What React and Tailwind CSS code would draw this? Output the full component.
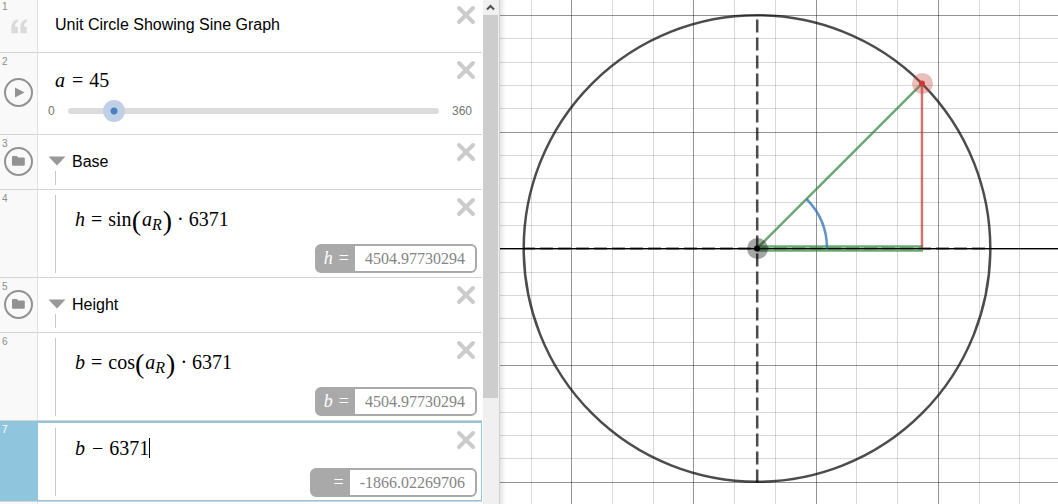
import React, { useState } from "react";

const CENTER = { x: 257, y: 248.5 };
const RADIUS = 233.3;

const MAJOR_X = [71, 193, 316, 438];
const MINOR_X = [31, 112, 153, 234, 275, 356, 397, 479, 519];
const MAJOR_Y = [15, 132, 365, 482];
const MINOR_Y = [38, 62, 85, 108, 155, 178, 202, 225, 272, 295, 318, 342, 388, 412, 435, 458];

function CloseButton() {
  return (
    <button type="button" aria-label="Delete" className="absolute right-1.5 top-[7px] cursor-pointer">
      <svg width="20" height="20" viewBox="0 0 20 20" className="block" stroke="#cccccc" strokeWidth="4" strokeLinecap="round">
        <path d="M3 3 L17 17 M17 3 L3 17" />
      </svg>
    </button>
  );
}

function PlayIcon() {
  return (
    <svg width="11" height="11" viewBox="0 0 11 11" className="ml-0.5" fill="#929292">
      <path d="M1 0.5 L10.5 5.5 L1 10.5 Z" />
    </svg>
  );
}

function FolderIcon() {
  return (
    <svg width="13" height="12" viewBox="0 0 13 12" fill="#929292">
      <path d="M0 2 Q0 1 1 1 H4.6 Q5.3 1 5.6 1.8 L5.9 2.4 H11.8 Q12.8 2.4 12.8 3.4 V9.8 Q12.8 10.8 11.8 10.8 H1 Q0 10.8 0 9.8 Z" />
    </svg>
  );
}

function QuoteIcon() {
  return (
    <svg width="17" height="15" viewBox="0 0 17 15" className="mt-1 ml-0.5" fill="#dadada">
      <path d="M6.6 0.3 C2.6 1 0.4 4.2 0.4 9 V14.3 H6.8 V7.8 H3.9 C4 5.2 4.9 3.6 6.9 2.8 Z" />
      <path d="M15.6 0.3 C11.6 1 9.4 4.2 9.4 9 V14.3 H15.8 V7.8 H12.9 C13 5.2 13.9 3.6 15.9 2.8 Z" />
    </svg>
  );
}

function RoundButton({ label, children }) {
  return (
    <button
      type="button"
      aria-label={label}
      className="w-[29px] h-[29px] shrink-0 rounded-full border-2 border-[#929292] flex items-center justify-center cursor-pointer"
    >
      {children}
    </button>
  );
}

function Row({ number, icon, selected, children }) {
  return (
    <li className={selected ? "flex bg-[#8fc6dd]" : "flex border-b border-[#d4d4d4]"}>
      <div
        className={
          selected
            ? "relative w-[38px] shrink-0 text-white"
            : "relative w-[38px] shrink-0 pb-0.5 border-r border-[#e2e2e2] bg-[#f9f9f9] text-[#8c8c8c] flex items-center justify-center"
        }
      >
        <span className="absolute left-0.5 top-1 text-[10px] leading-[10px]">{number}</span>
        {icon}
      </div>
      <div
        className={
          selected
            ? "relative flex-1 min-w-0 bg-white border-t-2 border-b border-[#8fc6dd] shadow-[inset_-1px_0_0_#8fc6dd]"
            : "relative flex-1 min-w-0 bg-white"
        }
      >
        {children}
        <CloseButton />
      </div>
    </li>
  );
}

function Folder({ name }) {
  return (
    <div className="relative h-[54px] flex items-center">
      <button type="button" aria-label={`Collapse ${name}`} className="ml-2.5 mb-0.5 cursor-pointer">
        <svg width="18" height="10" viewBox="0 0 18 10" fill="#999999">
          <path d="M0.5 0.5 H17.5 L9 9.5 Z" />
        </svg>
      </button>
      <input aria-label="Folder name" defaultValue={name} className="ml-1.5 mr-10 flex-1 min-w-0 outline-none" />
      <span className="absolute left-[17px] bottom-1 h-3.5 w-px bg-[#c8c8c8]" />
    </div>
  );
}

function Result({ name, value }) {
  return (
    <div className="flex w-fit ml-auto mr-[5px] h-[29px] rounded-md border-2 border-[#a9a9a9] bg-[#a9a9a9] font-['Liberation_Serif',serif] leading-[25px]">
      <span className="w-[38px] pr-1.5 flex justify-end gap-1.5 text-white text-lg leading-[25px]">
        <i>{name}</i>
        <span>=</span>
      </span>
      <output className="px-2.5 rounded-r-sm bg-white text-base leading-[25px] text-[#858585]">{value}</output>
    </div>
  );
}

function Trig({ left, fn }) {
  return (
    <div className="flex items-center h-9 text-xl font-['Liberation_Serif',serif]">
      <i>{left}</i>
      <span className="mx-1.5">=</span>
      <span>{fn}</span>
      <span className="mt-1 text-[28px] leading-9">(</span>
      <i className="ml-px">a</i>
      <i className="text-base mt-3">R</i>
      <span className="ml-px mt-1 text-[28px] leading-9">)</span>
      <span className="mx-[5px]">·</span>
      <span>6371</span>
    </div>
  );
}

function Indented({ children }) {
  return (
    <div className="relative pl-[37px]">
      <span className="absolute left-[17px] top-[5px] bottom-1 w-px bg-[#c8c8c8]" />
      {children}
    </div>
  );
}

function Slider() {
  const [value, setValue] = useState(45);
  return (
    <div className="pt-3 pb-3">
      <div className="pl-[17px] h-[30px] leading-[30px] text-xl font-['Liberation_Serif',serif]">
        <i>a</i>
        <span className="ml-[7px] mr-1.5">=</span>
        {value}
      </div>
      <div className="mt-[5px] pl-2.5 pr-2.5 h-[22px] flex items-center text-xs text-[#757575]">
        <span className="w-5">0</span>
        <div className="relative flex-1 h-1.5 rounded-full bg-[#dcdcdc]">
          <input
            type="range"
            min="0"
            max="360"
            value={value}
            aria-label="a"
            onChange={(e) => setValue(Number(e.target.value))}
            className="absolute -left-[11px] -right-[11px] -top-2 h-[22px] w-[calc(100%+22px)] appearance-none bg-transparent outline-none [&::-webkit-slider-thumb]:appearance-none [&::-webkit-slider-thumb]:w-[22px] [&::-webkit-slider-thumb]:h-[22px] [&::-webkit-slider-thumb]:rounded-full [&::-webkit-slider-thumb]:bg-[radial-gradient(circle,#4a80c0_3px,#bfd0e6_4px)]"
          />
        </div>
        <span className="ml-[13px]">360</span>
      </div>
    </div>
  );
}

function ExpressionList() {
  return (
    <div className="flex-1 min-w-0 flex flex-col mr-px overflow-hidden">
      <ol className="-mt-0.5">
        <Row number={1} icon={<QuoteIcon />}>
          <div className="h-[54px] flex items-center pl-[17px] pr-10">
            <input
              aria-label="Note"
              defaultValue="Unit Circle Showing Sine Graph"
              className="flex-1 min-w-0 outline-none"
            />
          </div>
        </Row>
        <Row number={2} icon={<RoundButton label="Play"><PlayIcon /></RoundButton>}>
          <Slider />
        </Row>
        <Row number={3} icon={<RoundButton label="Base folder"><FolderIcon /></RoundButton>}>
          <Folder name="Base" />
        </Row>
        <Row number={4}>
          <Indented>
            <div className="pt-[11px] pb-1">
              <Trig left="h" fn="sin" />
              <div className="mt-[7px]">
                <Result name="h" value="4504.97730294" />
              </div>
            </div>
          </Indented>
        </Row>
        <Row number={5} icon={<RoundButton label="Height folder"><FolderIcon /></RoundButton>}>
          <Folder name="Height" />
        </Row>
        <Row number={6}>
          <Indented>
            <div className="pt-[11px] pb-1">
              <Trig left="b" fn="cos" />
              <div className="mt-[7px]">
                <Result name="b" value="4504.97730294" />
              </div>
            </div>
          </Indented>
        </Row>
        <Row number={7} selected>
          <Indented>
            <div className="pt-2.5 pb-[3px]">
              <div className="h-[30px] flex items-center text-xl font-['Liberation_Serif',serif]">
                <i>b</i>
                <span className="ml-[7px] mr-1.5">−</span>
                <span>6371</span>
                <span className="h-5 w-px bg-black" />
              </div>
              <div className="mt-[5px]">
                <Result name="" value="-1866.02269706" />
              </div>
            </div>
          </Indented>
        </Row>
      </ol>
      <div className="flex-1 border-t border-[#d4d4d4] flex">
        <div className="w-[38px] border-r border-[#e2e2e2] bg-[#f9f9f9]" />
      </div>
    </div>
  );
}

function Scrollbar() {
  return (
    <div className="w-[15px] shrink-0 bg-[#f0f0f0] flex flex-col">
      <button type="button" aria-label="Scroll up" className="h-[15px] flex items-center justify-center">
        <svg width="9" height="7" viewBox="0 0 9 7" fill="none" stroke="#505050" strokeWidth="2">
          <path d="M1 5.5 L4.5 2 L8 5.5" />
        </svg>
      </button>
      <div className="h-[76%] bg-[#cdcdcd]" />
    </div>
  );
}

function Graph() {
  const leg = RADIUS * Math.SQRT1_2;
  const px = CENTER.x + leg;
  const py = CENTER.y - leg;
  const arc = 70 * Math.SQRT1_2;

  return (
    <svg
      viewBox="0 0 558 504"
      preserveAspectRatio="xMidYMid slice"
      className="block w-full h-full"
      role="img"
      aria-label="Unit circle graph"
    >
      {/* Grid */}
      <g fill="#000000" fillOpacity="0.15">
        {MINOR_X.map((x) => <rect key={x} x={x} y="0" width="1" height="504" />)}
        {MINOR_Y.map((y) => <rect key={y} x="0" y={y} width="558" height="1" />)}
      </g>
      <g fill="#000000" fillOpacity="0.42">
        {MAJOR_X.map((x) => <rect key={x} x={x} y="0" width="1" height="504" />)}
        {MAJOR_Y.map((y) => <rect key={y} x="0" y={y} width="558" height="1" />)}
      </g>
      <rect x="0" y="248" width="558" height="1" fill="#000000" />
      <rect x="0" y="249" width="558" height="1" fill="#000000" fillOpacity="0.4" />

      {/* Circle and its diameters */}
      <g fill="none" stroke="#000000" strokeOpacity="0.7" strokeWidth="2.5">
        <circle cx={CENTER.x} cy={CENTER.y} r={RADIUS} />
        <path d="M257.2 482.5 V19" strokeDasharray="13 5" />
        <path d="M24 248.5 H490" strokeWidth="2" strokeDasharray="13 5" strokeDashoffset="2" />
      </g>

      {/* Triangle */}
      <g fill="none" strokeWidth="2.5" strokeOpacity="0.75">
        <path d={`M257 246.5 H${px + 1}`} stroke="#388c46" />
        <path d={`M257 250.5 H${px + 1}`} stroke="#388c46" />
        <path d={`M257 248.5 L${px} ${py}`} stroke="#388c46" />
        <path d={`M${px} ${py} V248`} stroke="#c74440" />
        <path d={`M327 248.5 A70 70 0 0 0 ${257 + arc} ${248.5 - arc}`} stroke="#2d70b3" />
      </g>

      {/* Points */}
      <circle cx="257.5" cy="248.5" r="10.5" fill="#000000" fillOpacity="0.35" />
      <circle cx="257" cy="248.5" r="3" fill="#000000" />
      <circle cx={px + 0.5} cy={py} r="10.5" fill="#c74440" fillOpacity="0.35" />
      <circle cx={px} cy={py} r="3" fill="#c73a35" />
    </svg>
  );
}

export default function App() {
  return (
    <div className="h-screen grid grid-cols-[500fr_558fr] grid-rows-1 bg-white text-black text-base font-['Liberation_Sans',sans-serif] overflow-hidden">
      <aside className="flex min-w-0 min-h-0 border-r border-[#d0d0d0]">
        <ExpressionList />
        <Scrollbar />
        <div className="w-px bg-[#f0f0f0]" />
      </aside>
      <main className="relative min-w-0 min-h-0">
        <Graph />
        <div className="absolute inset-y-0 left-0 w-1.5 bg-linear-to-r from-black/10 to-transparent" />
      </main>
    </div>
  );
}
